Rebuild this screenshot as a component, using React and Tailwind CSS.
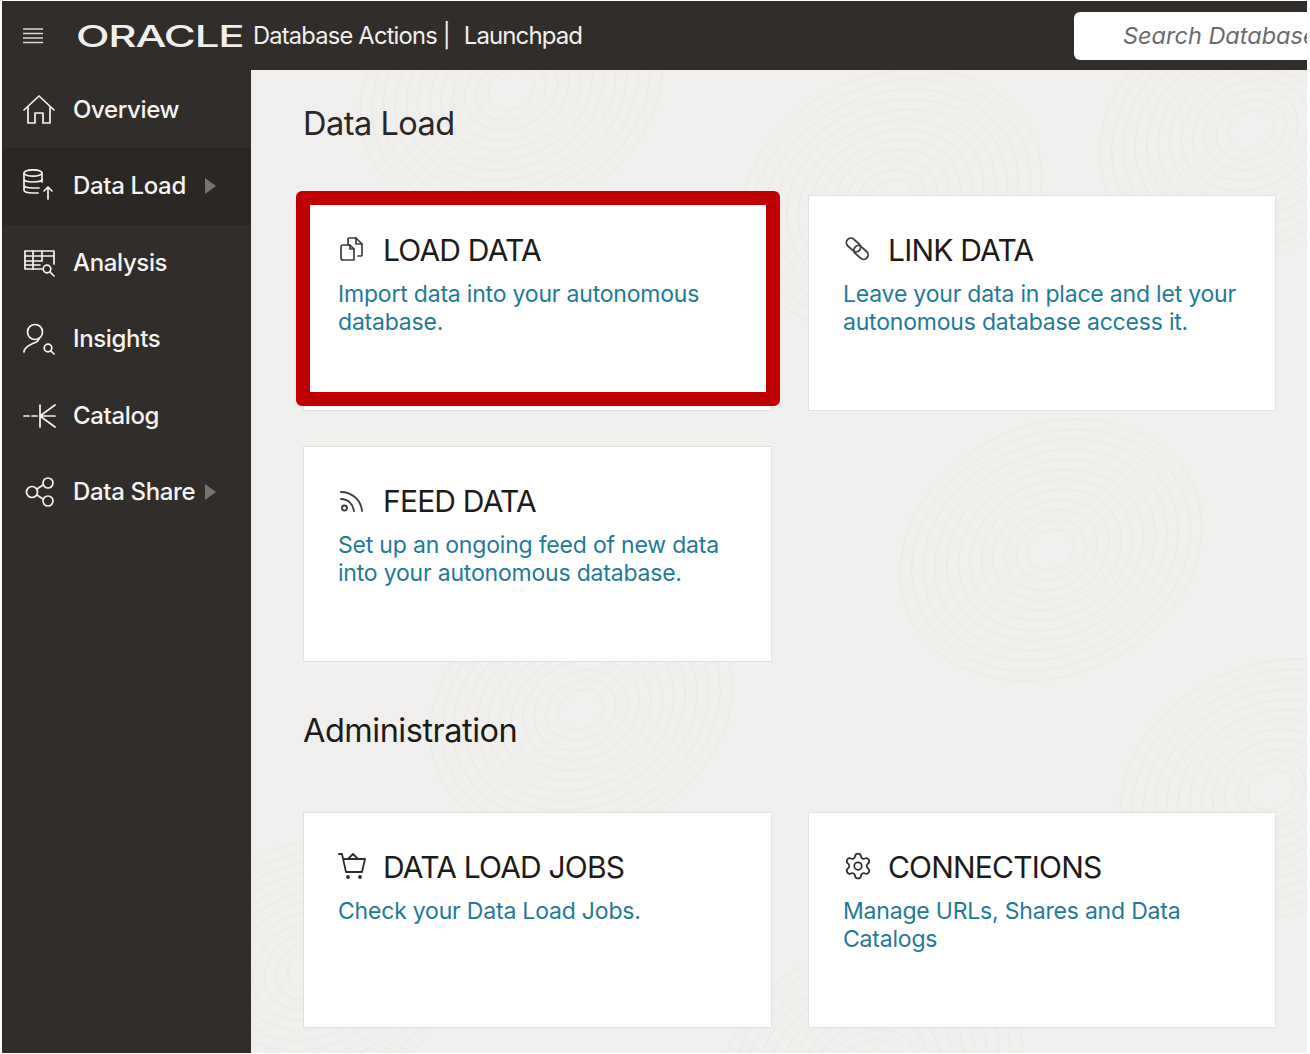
import React from "react";
import { Settings } from "lucide-react";

const Stroke = ({ className, size = 34, box = 34, width = 1.7, children }) => (
  <svg
    width={size}
    height={size}
    viewBox={`0 0 ${box} ${box}`}
    fill="none"
    stroke="currentColor"
    strokeWidth={width}
    strokeLinecap="round"
    strokeLinejoin="round"
    className={className}
  >
    {children}
  </svg>
);

const HomeIcon = () => (
  <Stroke>
    <path d="M2 17 17 3l15 14" />
    <path d="M6 14v16h7V20h8v10h7V14" />
  </Stroke>
);

const DataLoadIcon = () => (
  <Stroke>
    <ellipse cx="11" cy="4" rx="9" ry="3.200" />
    <path d="M2 4v17c0 2 3 3 9 3h5M20 4v9M2 10c0 2 3 3 9 3s9-1 9-3M2 16c0 2 3 3 9 3h6" />
    <path d="M26 30V18M22 22l4-4 4 4" />
  </Stroke>
);

const AnalysisIcon = () => (
  <Stroke>
    <path d="M20 23H3V5h29v13" />
    <path d="M3 10h29M3 15h17M3 19h15M11 5v18M20 5v10" />
    <circle cx="25" cy="23" r="3.800" />
    <path d="m28 26 4 4" />
  </Stroke>
);

const InsightsIcon = () => (
  <Stroke>
    <circle cx="13" cy="10" r="7.500" />
    <path d="M2 30c0-5 6-7 10-9 3-1 5-2 5-5" />
    <circle cx="26" cy="26" r="3.800" />
    <path d="m29 29 3 3" />
  </Stroke>
);

const CatalogIcon = () => (
  <Stroke>
    <path d="M2 17h5M10 17h5M18 6v22M33 6 18 17l15 11M18 17h15" />
  </Stroke>
);

const ShareIcon = () => (
  <Stroke>
    <circle cx="10" cy="17" r="5.500" />
    <circle cx="26" cy="8" r="5" />
    <circle cx="26" cy="26" r="5" />
    <path d="m15 14 6-4M15 20l6 4" />
  </Stroke>
);

const FilesIcon = () => (
  <Stroke size={28} box={28} className="text-[#3f3d3b]">
    <path d="M3 12a2 2 0 0 1 2-2h7l4 4v11H5a2 2 0 0 1-2-2z" />
    <path d="M12 10v4h4M10 10V4a1 1 0 0 1 1-1h7l6 6v11a1 1 0 0 1-1 1h-3" />
    <path d="M18 3v6h6" />
  </Stroke>
);

const LinkIcon = () => (
  <Stroke size={28} box={28} width={1.8} className="text-[#3f3d3b]">
    <rect x="2.500" y="5.500" width="16" height="9" rx="4.500" transform="rotate(42 10.500 10)" />
    <rect x="10" y="13" width="16" height="9" rx="4.500" transform="rotate(42 18 17.500)" />
  </Stroke>
);

const FeedIcon = () => (
  <Stroke size={28} box={28} width={1.9} className="text-[#3f3d3b]">
    <circle cx="6.500" cy="22" r="2.500" />
    <path d="M3 13c7 0 12 5 13 12M3 6c11 0 20 8 21 19" />
  </Stroke>
);

const CartIcon = () => (
  <Stroke size={30} box={30} width={1.8} className="text-[#2f2d2b]">
    <path d="M1 3h3l4 18h16l3-13H5" />
    <path d="m10 8 5-5 5 5" />
    <circle cx="10" cy="26" r="1" />
    <circle cx="22" cy="26" r="1" />
  </Stroke>
);

const MenuIcon = () => (
  <svg width="22" height="18" viewBox="0 0 22 18" stroke="#d9d8d6" strokeWidth="1.6">
    <path d="M1 2h20M1 6.500h20M1 11h20M1 15.500h20" />
  </svg>
);

const Caret = () => (
  <span className="ml-auto mr-[35px] w-0 h-0 border-y-[8px] border-y-transparent border-l-[11px] border-l-[#77736f]" />
);

const NavLinks = [
  { title: "Overview", icon: <HomeIcon /> },
  { title: "Data Load", icon: <DataLoadIcon />, active: true, caret: true },
  { title: "Analysis", icon: <AnalysisIcon /> },
  { title: "Insights", icon: <InsightsIcon /> },
  { title: "Catalog", icon: <CatalogIcon /> },
  { title: "Data Share", icon: <ShareIcon />, caret: true },
];

// faint fingerprint-like swirls behind the content
const Swirls = [
  [260, 20],
  [640, 130],
  [1000, 60],
  [800, 480],
  [330, 640],
  [1020, 720],
  [60, 900],
  [620, 1000],
];

const Texture = () => (
  <svg className="absolute inset-0 w-full h-full" fill="none" stroke="#ecebe8" strokeWidth="2">
    {Swirls.map(([x, y]) =>
      [24, 36, 48, 60, 72, 84, 96, 108, 120, 132, 144, 156].map((r) => (
        <ellipse key={`${x}-${y}-${r}`} cx={x} cy={y} rx={r} ry={r * 0.8} transform={`rotate(-25 ${x} ${y})`} />
      ))
    )}
  </svg>
);

const Card = ({ icon, title, children, highlight }) => (
  <div className="relative bg-white border border-[#e2e1de] h-[216px] pt-[35px] pl-[34px] pr-[30px]">
    <div className="flex items-center h-[38px] text-[#1d1b19]">
      <span className="w-[45px] -mt-[3px] flex">{icon}</span>
      <h2 className="text-[30px] tracking-[-0.8px] leading-[38px]">{title}</h2>
    </div>
    <p className="mt-[11px] text-[23px] tracking-[-0.2px] leading-[28px] text-[#1f7a99]">{children}</p>
    {highlight && (
      <div className="absolute -top-[5px] -left-[8px] w-[484px] h-[215px] border-[14px] border-[#c00000] rounded-[6px]" />
    )}
  </div>
);

const App = () => {
  return (
    <div className="w-[1310px] h-[1054px] bg-white pl-[2px] pr-[3px] pt-[1px] pb-[1px] overflow-hidden font-['Inter',sans-serif]">
      <div className="flex flex-col h-full">
        {/* Top bar */}
        <header className="flex items-center h-[69px] shrink-0 bg-[#312d2a] text-[#f1efed]">
          <span className="ml-[20px] flex">
            <MenuIcon />
          </span>
          <span className="ml-[32px] w-[168px] text-[38px] leading-none font-medium tracking-[-1px] scale-x-[1.15] scale-y-[0.78] origin-left whitespace-nowrap">
            ORACLE
          </span>
          <span className="ml-[9px] text-[23.700px] tracking-[-0.8px] whitespace-nowrap">Database Actions |</span>
          <span className="ml-[14px] text-[24px] tracking-[-0.9px]">Launchpad</span>
          <div className="ml-auto w-[233px] h-[48px] bg-white rounded-l-[6px] pl-[49px] flex items-center overflow-hidden">
            <span className="text-[23.500px] italic text-[#6c6a68] whitespace-nowrap">Search Database</span>
          </div>
        </header>

        <div className="flex flex-1 min-h-0">
          {/* Sidebar */}
          <nav className="w-[249px] shrink-0 bg-[#312d2a] pt-[1.500px] text-[#f5f4f2]">
            {NavLinks.map((link) => (
              <div
                key={link.title}
                className={`flex items-center h-[76.500px] pl-[20px] ${link.active ? "bg-[#2a2724]" : ""}`}
              >
                <span className="w-[51px] flex">{link.icon}</span>
                <span className="text-[24px] font-medium tracking-[-0.35px] whitespace-nowrap">{link.title}</span>
                {link.caret && <Caret />}
              </div>
            ))}
          </nav>

          {/* Main */}
          <main className="relative flex-1 bg-[#f0efed] pl-[52px] pt-[32px]">
            <Texture />
            <h1 className="relative text-[32.500px] leading-[44px] tracking-[-0.5px] text-[#2a2826]">Data Load</h1>
            <div className="mt-[49px] grid grid-cols-[469px_468px] gap-x-[36px] gap-y-[35px]">
              <Card icon={<FilesIcon />} title="LOAD DATA" highlight>
                Import data into your autonomous database.
              </Card>
              <Card icon={<LinkIcon />} title="LINK DATA">
                Leave your data in place and let your autonomous database access it.
              </Card>
              <Card icon={<FeedIcon />} title="FEED DATA">
                Set up an ongoing feed of new data into your autonomous database.
              </Card>
            </div>
            <h1 className="relative mt-[47px] text-[32.500px] leading-[44px] tracking-[-0.5px] text-[#1d1b19]">Administration</h1>
            <div className="mt-[59px] grid grid-cols-[469px_468px] gap-x-[36px]">
              <Card icon={<CartIcon />} title="DATA LOAD JOBS">
                Check your Data Load Jobs.
              </Card>
              <Card icon={<Settings size={30} strokeWidth={1.4} className="text-[#2f2d2b]" />} title="CONNECTIONS">
                Manage URLs, Shares and Data Catalogs
              </Card>
            </div>
          </main>
        </div>
      </div>
    </div>
  );
};

export default App;
